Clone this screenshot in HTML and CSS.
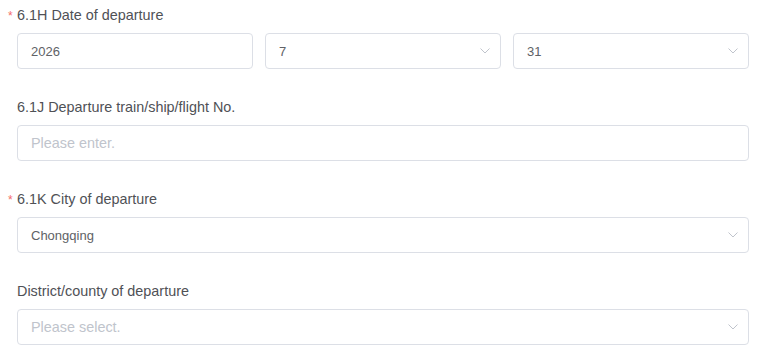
FILE: index.html
```html
<!DOCTYPE html>
<html>
<head>
<meta charset="utf-8">
<link rel="stylesheet" href="styles.css">
</head>
<body>
<form class="form">
  <div class="item">
    <div class="label"><span class="req">*</span>6.1H Date of departure</div>
    <div class="row3">
      <div class="box"><span class="val">2026</span></div>
      <div class="box"><span class="val">7</span><svg class="arrow" viewBox="0 0 10 6" width="10" height="6"><path d="M0.5 0.5 L5 5 L9.5 0.5" fill="none" stroke="#c0c4cc" stroke-width="1"/></svg></div>
      <div class="box"><span class="val">31</span><svg class="arrow" viewBox="0 0 10 6" width="10" height="6"><path d="M0.5 0.5 L5 5 L9.5 0.5" fill="none" stroke="#c0c4cc" stroke-width="1"/></svg></div>
    </div>
  </div>
  <div class="item">
    <div class="label">6.1J Departure train/ship/flight No.</div>
    <div class="box"><span class="ph">Please enter.</span></div>
  </div>
  <div class="item">
    <div class="label"><span class="req">*</span>6.1K City of departure</div>
    <div class="box"><span class="val">Chongqing</span><svg class="arrow" viewBox="0 0 10 6" width="10" height="6"><path d="M0.5 0.5 L5 5 L9.5 0.5" fill="none" stroke="#c0c4cc" stroke-width="1"/></svg></div>
  </div>
  <div class="item">
    <div class="label">District/county of departure</div>
    <div class="box"><span class="ph">Please select.</span><svg class="arrow" viewBox="0 0 10 6" width="10" height="6"><path d="M0.5 0.5 L5 5 L9.5 0.5" fill="none" stroke="#c0c4cc" stroke-width="1"/></svg></div>
  </div>
</form>
</body>
</html>
```
FILE: styles.css
```css
html, body {
  margin: 0;
  padding: 0;
  background: #ffffff;
}
body {
  font-family: "Liberation Sans", Arial, sans-serif;
}
.form {
  padding: 4px 20px 0 17px;
}
.item {
  margin-bottom: 27px;
}
.label {
  font-size: 14.4px;
  line-height: 22px;
  height: 22px;
  color: #4f5156;
  margin-bottom: 7px;
}
.req {
  color: #f56c6c;
  font-size: 12px;
  margin-left: -9px;
  margin-right: 3px;
  display: inline-block;
  width: 6px;
}
.row3 {
  display: grid;
  grid-template-columns: repeat(3, 1fr);
  gap: 12px;
}
.box {
  box-sizing: border-box;
  height: 36px;
  border: 1px solid #dcdfe6;
  border-radius: 4px;
  display: flex;
  align-items: center;
  justify-content: space-between;
  padding: 0 10px 0 13px;
  font-size: 13px;
}
.val {
  color: #606266;
}
.ph {
  color: #c0c4cc;
  font-size: 14.4px;
}
.arrow {
  display: block;
}
```
